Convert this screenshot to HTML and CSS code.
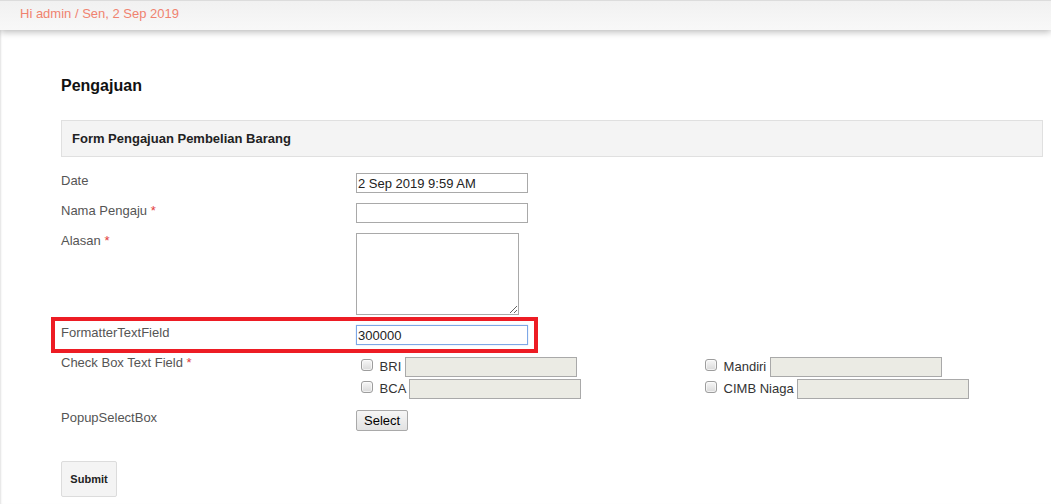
FILE: index.html
```html
<!DOCTYPE html>
<html>
<head>
<meta charset="utf-8">
<link rel="stylesheet" href="styles.css">
</head>
<body>
<header class="topbar"><span class="greet">Hi admin / Sen, 2 Sep 2019</span></header>
<main class="content">
  <h2 class="page-title">Pengajuan</h2>
  <div class="panel">Form Pengajuan Pembelian Barang</div>
  <form class="form">
    <div class="row">
      <label class="lbl">Date</label>
      <div class="field"><input class="txt" type="text" value="2 Sep 2019 9:59 AM"></div>
    </div>
    <div class="row">
      <label class="lbl">Nama Pengaju <span class="req">*</span></label>
      <div class="field"><input class="txt" type="text"></div>
    </div>
    <div class="row">
      <label class="lbl">Alasan <span class="req">*</span></label>
      <div class="field"><textarea class="area"></textarea></div>
    </div>
    <div class="row row-mark">
      <label class="lbl">FormatterTextField</label>
      <div class="field"><input class="txt focus" type="text" value="300000"></div>
      <div class="mark"></div>
    </div>
    <div class="row row-cb">
      <label class="lbl">Check Box Text Field <span class="req">*</span></label>
      <div class="field cbgrid">
        <div class="cb"><input type="checkbox" class="chk"> BRI <input class="txt dis" type="text" disabled></div>
        <div class="cb"><input type="checkbox" class="chk"> Mandiri <input class="txt dis" type="text" disabled></div>
        <div class="cb"><input type="checkbox" class="chk"> BCA <input class="txt dis" type="text" disabled></div>
        <div class="cb"><input type="checkbox" class="chk"> CIMB Niaga <input class="txt dis" type="text" disabled></div>
      </div>
    </div>
    <div class="row">
      <label class="lbl">PopupSelectBox</label>
      <div class="field"><button type="button" class="sel">Select</button></div>
    </div>
    <div class="actions"><button type="button" class="submit">Submit</button></div>
  </form>
</main>
</body>
</html>
```
FILE: styles.css
```css
html, body { margin: 0; padding: 0; background: #fff; }
body { font-family: "Liberation Sans", Arial, sans-serif; font-size: 13px; color: #555; }

.topbar {
  border-top: 1px solid #dcdcdc;
  background: linear-gradient(#f1f1f1, #f8f8f8);
  box-shadow: 0 2px 7px rgba(0,0,0,0.28);
  padding-left: 20px;
  box-sizing: border-box;
  height: 30px;
  line-height: 26px;
  position: relative;
  z-index: 1;
}
.greet { color: #f0826f; font-size: 13px; }

.content {
  padding: 0 8px 0 61px;
  min-height: 474px;
  box-shadow: inset 2px 0 2px -1px #e2e2e2;
  overflow: hidden;
}
.page-title {
  margin: 47px 0 0;
  font-size: 16px;
  line-height: 18px;
  font-weight: bold;
  color: #111;
}
.panel {
  margin-top: 25px;
  background: #f4f4f4;
  border: 1px solid #e0e0e0;
  padding: 10px 10px;
  line-height: 15px;
  font-weight: bold;
  color: #222;
}
.form { margin-top: 16px; }
.row {
  display: flex;
  align-items: flex-start;
  margin-bottom: 10px;
}
.lbl {
  width: 295px;
  flex: none;
  line-height: 15px;
  color: #555;
}
.req { color: #e23b3b; }
.field { flex: 1; }
.txt {
  display: block;
  box-sizing: border-box;
  width: 172px;
  height: 20px;
  margin: 0;
  padding: 1px 1px;
  border: 1px solid #a9a9a9;
  font-family: "Liberation Sans", Arial, sans-serif;
  font-size: 13px;
  color: #222;
  background: #fff;
  outline: none;
}
.txt.focus { border-color: #7ea7e6; box-shadow: 0 0 1px #a8c6f0; }
.area {
  display: block;
  box-sizing: border-box;
  width: 163px;
  height: 82px;
  margin: 0;
  border: 1px solid #a9a9a9;
  resize: both;
}
.row-mark { position: relative; }
.mark {
  position: absolute;
  left: -10px;
  top: -8px;
  width: 487px;
  height: 36px;
  box-sizing: border-box;
  border: 4px solid #ed1c24;
}
.row-cb { margin-bottom: 9px; }
.cbgrid {
  padding-top: 2px;
  display: grid;
  grid-template-columns: 344px 1fr;
  grid-auto-rows: 22px;
}
.cb {
  display: flex;
  align-items: flex-start;
  height: 22px;
  line-height: 20px;
  color: #333;
  white-space: pre;
}
.chk {
  -webkit-appearance: none;
  appearance: none;
  box-sizing: border-box;
  margin: 2px 3px 0 5px;
  width: 12px;
  height: 12px;
  border: 1px solid #9d9d9d;
  border-radius: 3px;
  background: linear-gradient(#f7f7f7, #d9d9d9);
  box-shadow: inset 0 0 0 1px rgba(255,255,255,0.6);
}
.cb .txt { display: inline-block; margin-left: 0; }
.txt.dis { background: #ebebe4; border-color: #a9a9a9; }
.sel {
  height: 21px;
  padding: 0 7px;
  margin: 0;
  border: 1px solid #a9a9a9;
  border-radius: 2px;
  background: linear-gradient(#f6f6f6, #e2e2e2);
  font-family: "Liberation Sans", Arial, sans-serif;
  font-size: 13px;
  color: #000;
}
.actions { margin-top: 30px; }
.submit {
  width: 56px;
  height: 36px;
  padding: 0;
  border: 1px solid #dcdcdc;
  border-radius: 2px;
  background: #f4f4f4;
  font-family: "Liberation Sans", Arial, sans-serif;
  font-size: 11px;
  font-weight: bold;
  color: #222;
}
```
